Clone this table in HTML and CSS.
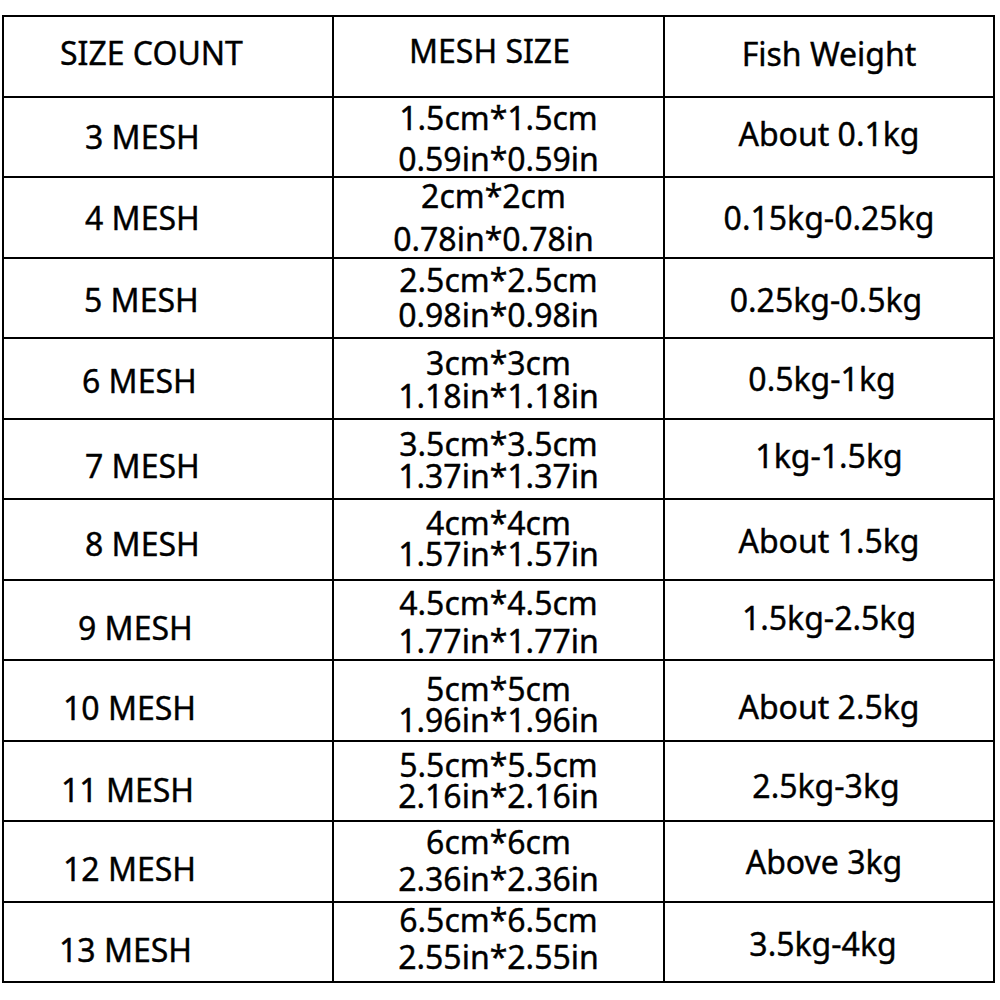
FILE: index.html
```html
<!DOCTYPE html>
<html lang="en">
<head>
<meta charset="utf-8">
<title>Mesh Size Chart</title>
<link rel="stylesheet" href="styles.css">
</head>
<body>
<div class="sheet">
  <div class="cell count r0">SIZE COUNT</div>
  <div class="cell size r0">MESH SIZE</div>
  <div class="cell weight r0">Fish Weight</div>

  <div class="cell count r1">3 MESH</div>
  <div class="cell size r1"><span>1.5cm*1.5cm</span><span>0.59in*0.59in</span></div>
  <div class="cell weight r1">About 0.1kg</div>

  <div class="cell count r2">4 MESH</div>
  <div class="cell size r2"><span>2cm*2cm</span><span>0.78in*0.78in</span></div>
  <div class="cell weight r2">0.15kg-0.25kg</div>

  <div class="cell count r3">5 MESH</div>
  <div class="cell size r3"><span>2.5cm*2.5cm</span><span>0.98in*0.98in</span></div>
  <div class="cell weight r3">0.25kg-0.5kg</div>

  <div class="cell count r4">6 MESH</div>
  <div class="cell size r4"><span>3cm*3cm</span><span>1.18in*1.18in</span></div>
  <div class="cell weight r4">0.5kg-1kg</div>

  <div class="cell count r5">7 MESH</div>
  <div class="cell size r5"><span>3.5cm*3.5cm</span><span>1.37in*1.37in</span></div>
  <div class="cell weight r5">1kg-1.5kg</div>

  <div class="cell count r6">8 MESH</div>
  <div class="cell size r6"><span>4cm*4cm</span><span>1.57in*1.57in</span></div>
  <div class="cell weight r6">About 1.5kg</div>

  <div class="cell count r7">9 MESH</div>
  <div class="cell size r7"><span>4.5cm*4.5cm</span><span>1.77in*1.77in</span></div>
  <div class="cell weight r7">1.5kg-2.5kg</div>

  <div class="cell count r8">10 MESH</div>
  <div class="cell size r8"><span>5cm*5cm</span><span>1.96in*1.96in</span></div>
  <div class="cell weight r8">About 2.5kg</div>

  <div class="cell count r9">11 MESH</div>
  <div class="cell size r9"><span>5.5cm*5.5cm</span><span>2.16in*2.16in</span></div>
  <div class="cell weight r9">2.5kg-3kg</div>

  <div class="cell count r10">12 MESH</div>
  <div class="cell size r10"><span>6cm*6cm</span><span>2.36in*2.36in</span></div>
  <div class="cell weight r10">Above 3kg</div>

  <div class="cell count r11">13 MESH</div>
  <div class="cell size r11"><span>6.5cm*6.5cm</span><span>2.55in*2.55in</span></div>
  <div class="cell weight r11">3.5kg-4kg</div>
</div>
</body>
</html>
```
FILE: styles.css
```css
html, body {
  margin: 0;
  padding: 0;
  background: #fff;
}

.sheet {
  margin: 15px 0 0 2px;
  width: 993px;
  height: 968px;
  box-sizing: border-box;
  display: grid;
  grid-template-columns: 328px 329px 328px;
  grid-template-rows: repeat(12, 1fr);
  gap: 2px;
  padding: 2px;
  background: #000;
  font-family: "Noto Sans", "Open Sans", sans-serif;
  font-size: 32px;
  line-height: 1.2;
  color: #000;
  -webkit-text-stroke: 0.4px #000;
}

.cell {
  background: #fff;
  display: flex;
  flex-direction: column;
  justify-content: center;
  box-sizing: border-box;
  white-space: nowrap;
  min-height: 0;
}

.count {
  align-items: flex-start;
  padding-left: 81px;
}

.size,
.weight {
  align-items: center;
}

.size span {
  display: block;
}

/* first column */
.count.r0 { padding-left: 56px; padding-bottom: 7px; }
.count.r2 { padding-top: 2px; }
.count.r3 { padding-left: 80px; padding-top: 4px; }
.count.r4 { padding-left: 78px; padding-top: 6px; }
.count.r5 { padding-top: 15px; }
.count.r6 { padding-top: 10px; }
.count.r7 { padding-left: 74px; padding-top: 16px; }
.count.r8 { padding-left: 59px; padding-top: 16px; }
.count.r9 { padding-left: 57px; padding-top: 19px; }
.count.r10 { padding-left: 59px; padding-top: 15px; }
.count.r11 { padding-left: 55px; padding-top: 17px; }

/* mesh size column */
.size.r0 { padding-bottom: 11px; padding-right: 18px; }
.size.r1 { line-height: 41px; padding-top: 2px; }
.size.r2 { line-height: 43px; padding-right: 10px; }
.size.r3 { line-height: 35px; padding-bottom: 2px; }
.size.r4 { line-height: 33px; padding-top: 2px; }
.size.r5 { line-height: 32px; padding-top: 2px; }
.size.r6 { line-height: 31px; padding-bottom: 2px; }
.size.r7 { line-height: 38px; padding-top: 4px; }
.size.r8 { line-height: 31px; padding-top: 8px; }
.size.r9 { line-height: 31px; padding-bottom: 2px; }
.size.r10 { line-height: 37px; padding-bottom: 3px; }
.size.r11 { line-height: 37px; padding-bottom: 7px; }

/* fish weight column */
.weight.r0 { padding-bottom: 5px; }
.weight.r1 { padding-bottom: 6px; }
.weight.r2 { padding-top: 2px; }
.weight.r3 { padding-top: 5px; padding-right: 6px; }
.weight.r4 { padding-top: 1px; padding-right: 14px; }
.weight.r5 { padding-bottom: 5px; }
.weight.r6 { padding-top: 4px; }
.weight.r7 { padding-bottom: 4px; }
.weight.r8 { padding-top: 14px; }
.weight.r9 { padding-top: 10px; padding-right: 6px; }
.weight.r10 { padding-top: 2px; padding-right: 10px; }
.weight.r11 { padding-top: 5px; padding-right: 12px; }
```
